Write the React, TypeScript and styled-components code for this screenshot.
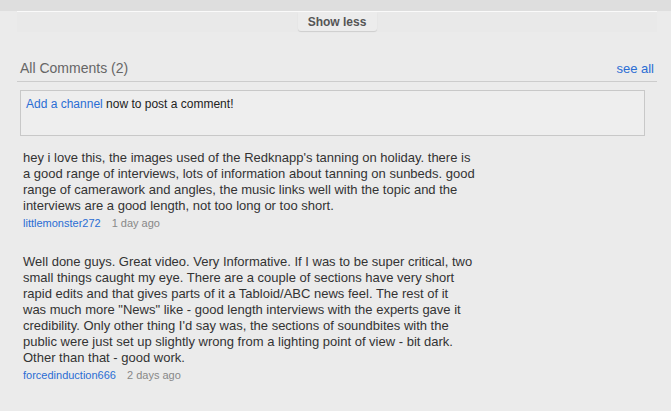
import React from "react";
import styled, { createGlobalStyle } from "styled-components";

const GlobalStyle = createGlobalStyle`
  body {
    margin: 0;
    background: #ebebeb;
    font-family: Arial, "Liberation Sans", sans-serif;
  }
`;

const TopBand = styled.div`
  height: 11px;
  background: #dedede;
`;

const Drawer = styled.div`
  margin: 0 14px 0 17px;
  height: 20px;
  border-top: 1px solid #fafafa;
  background: #e9e9e9;
  display: flex;
  justify-content: center;
  align-items: flex-start;
`;

const ToggleButton = styled.button`
  width: 79px;
  height: 19px;
  border: none;
  border-radius: 0 0 3px 3px;
  background: #ececec;
  box-shadow: 0 1px 1px rgba(0, 0, 0, 0.12);
  font-family: Arial, "Liberation Sans", sans-serif;
  font-size: 12px;
  font-weight: bold;
  color: #555;
  padding: 0;
  cursor: pointer;
`;

const Section = styled.div`
  padding: 0 14px 0 17px;
`;

const Header = styled.div`
  display: flex;
  justify-content: space-between;
  align-items: flex-end;
  margin-top: 28px;
  padding: 0 3px 5px 3px;
  border-bottom: 1px solid #cccccc;
`;

const Title = styled.h3`
  margin: 0;
  font-size: 14px;
  font-weight: normal;
  color: #666;
  line-height: 16px;
`;

const Link = styled.a`
  color: #2a6dd4;
  text-decoration: none;
  cursor: pointer;
`;

const SeeAll = styled(Link)`
  font-size: 13px;
  line-height: 16px;
  position: relative;
  top: 1px;
`;

const PostBox = styled.div`
  margin: 8px 12px 0 3px;
  height: 46px;
  border: 1px solid #c8c8c8;
  background: #eeeeee;
  padding: 6px 5px 0;
  box-sizing: border-box;
  font-size: 12px;
  color: #222;
  line-height: 14px;
`;

const CommentList = styled.div`
  display: flex;
  flex-direction: column;
  gap: 24px;
  padding: 14px 0 0 6px;
`;

const Comment = styled.div`
  display: flex;
  flex-direction: column;
`;

const Body = styled.p`
  margin: 0;
  font-size: 13px;
  line-height: 16px;
  color: #333;
  white-space: pre-line;
`;

const Meta = styled.div`
  display: flex;
  gap: 11px;
  margin-top: 2px;
  font-size: 11px;
  line-height: 14px;
`;

const Author = styled(Link)`
  color: #2a6dd4;
`;

const Time = styled.span`
  color: #888;
`;

const comments = [
  {
    author: "littlemonster272",
    time: "1 day ago",
    text: `hey i love this, the images used of the Redknapp's tanning on holiday. there is
a good range of interviews, lots of information about tanning on sunbeds. good
range of camerawork and angles, the music links well with the topic and the
interviews are a good length, not too long or too short.`,
  },
  {
    author: "forcedinduction666",
    time: "2 days ago",
    text: `Well done guys. Great video. Very Informative. If I was to be super critical, two
small things caught my eye. There are a couple of sections have very short
rapid edits and that gives parts of it a Tabloid/ABC news feel. The rest of it
was much more "News" like - good length interviews with the experts gave it
credibility. Only other thing I'd say was, the sections of soundbites with the
public were just set up slightly wrong from a lighting point of view - bit dark.
Other than that - good work.`,
  },
];

export default function App() {
  return (
    <>
      <GlobalStyle />
      <TopBand />
      <Drawer>
        <ToggleButton>Show less</ToggleButton>
      </Drawer>
      <Section>
        <Header>
          <Title>All Comments (2)</Title>
          <SeeAll>see all</SeeAll>
        </Header>
        <PostBox>
          <Link>Add a channel</Link> now to post a comment!
        </PostBox>
        <CommentList>
          {comments.map((c) => (
            <Comment key={c.author}>
              <Body>{c.text}</Body>
              <Meta>
                <Author>{c.author}</Author>
                <Time>{c.time}</Time>
              </Meta>
            </Comment>
          ))}
        </CommentList>
      </Section>
    </>
  );
}
